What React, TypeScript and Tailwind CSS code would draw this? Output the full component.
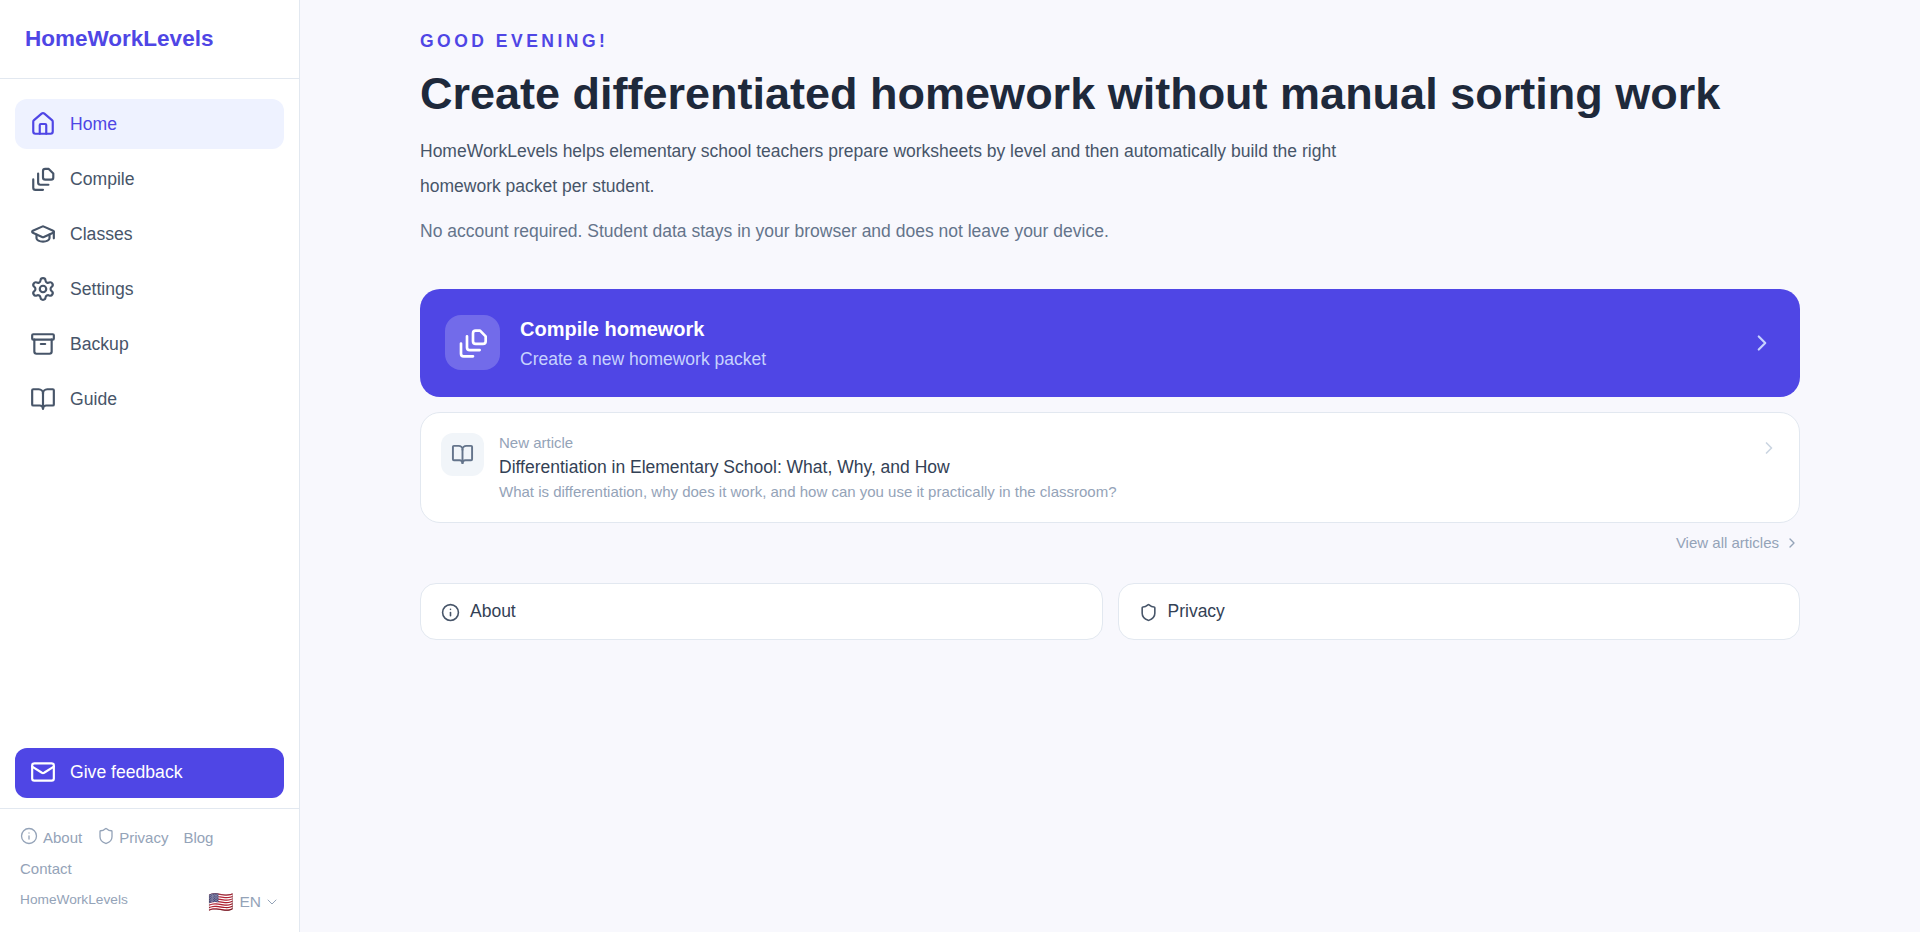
import { Archive, BookOpen, ChevronDown, ChevronRight, GraduationCap, Home, Info, Mail, Settings, Shield } from 'lucide-react';

// three stacked sheets, not in lucide
const CompileIcon = ({ className, strokeWidth = 2 }: { className?: string; strokeWidth?: number }) => (
  <svg
    className={className}
    viewBox="0 0 24 24"
    fill="none"
    stroke="currentColor"
    strokeWidth={strokeWidth}
    strokeLinecap="round"
    strokeLinejoin="round"
  >
    <path d="M14 2.700h3.300l4.200 4.300v3.600a2 2 0 0 1-2 2H14a2 2 0 0 1-2-2V4.700a2 2 0 0 1 2-2z" />
    <path d="M7.500 7v8.300a2 2 0 0 0 2 2H17" />
    <path d="M3 12.400V20a2 2 0 0 0 2 2h7" />
  </svg>
);

const NAV = [
  { label: 'Home', icon: Home, active: true },
  { label: 'Compile', icon: CompileIcon },
  { label: 'Classes', icon: GraduationCap },
  { label: 'Settings', icon: Settings },
  { label: 'Backup', icon: Archive },
  { label: 'Guide', icon: BookOpen },
];

const Sidebar = () => (
  <aside className="flex h-[932px] w-[300px] shrink-0 flex-col border-r border-[#e2e8f0] bg-white">
    <div className="flex h-[79px] items-center border-b border-[#e2e8f0] pl-[25px]">
      <span className="text-[22.5px] font-bold text-[#4f46e5]">HomeWorkLevels</span>
    </div>
    <nav className="flex flex-1 flex-col gap-[5px] px-[15px] pt-[20px]">
      {NAV.map((item) => (
        <a
          key={item.label}
          className={`flex h-[50px] items-center gap-[14px] rounded-[12px] px-[15px] text-[17.6px] ${
            item.active ? 'bg-[#eef2ff] text-[#4f46e5]' : 'text-[#475569]'
          }`}
        >
          <item.icon className="size-[26px]" strokeWidth={2} />
          {item.label}
        </a>
      ))}
    </nav>
    <div className="px-[15px] pb-[10px]">
      <button className="flex h-[50px] w-full items-center gap-[14px] rounded-[12px] bg-[#4f46e5] px-[15px] pb-[2px] text-[17.6px] text-white">
        <Mail className="size-[26px]" strokeWidth={2} />
        Give feedback
      </button>
    </div>
    <div className="h-[124px] border-t border-[#e2e8f0] px-[20px] pt-[17px] text-[#94a3b8]">
      <div className="flex items-center gap-[15px] text-[15px] leading-[24px]">
        <span className="flex items-center gap-[5px]">
          <Info className="size-[18px] -translate-y-[2px]" strokeWidth={1.75} />
          About
        </span>
        <span className="flex items-center gap-[4px]">
          <Shield className="size-[18px] -translate-y-[2px]" strokeWidth={1.75} />
          Privacy
        </span>
        <span>Blog</span>
      </div>
      <div className="mt-[7px] text-[15px] leading-[24px]">Contact</div>
      <div className="mt-[9px] flex items-start justify-between">
        <span className="text-[13.7px] leading-[20px]">HomeWorkLevels</span>
        <span className="-mr-[1px] flex items-center gap-[5px] text-[15.5px] leading-[24px]">
          <span className="text-[20.5px] leading-[24px]">🇺🇸</span>
          EN
          <ChevronDown className="-ml-[2px] size-[16px]" strokeWidth={1.5} />
        </span>
      </div>
    </div>
  </aside>
);

const InfoCard = ({ icon: Icon, label }: { icon: typeof Info; label: string }) => (
  <a className="flex h-[57px] flex-1 items-center gap-[10px] rounded-[16px] border border-[#e2e8f0] bg-white px-[20px] text-[17.5px] text-[#334155]">
    <Icon className="size-[19px] translate-y-[1px] text-[#475569]" strokeWidth={2} />
    {label}
  </a>
);

export default function App() {
  return (
    <div className="flex h-[932px] overflow-hidden bg-[#f8f8fd] font-['Liberation_Sans',sans-serif]">
      <Sidebar />
      <main className="flex-1 px-[120px] pt-[31px]">
        <p className="text-[17.5px] leading-[21px] font-bold tracking-[3.5px] text-[#4f46e5]">GOOD EVENING!</p>
        <h1 className="mt-[15px] text-[45px] leading-[54px] font-bold whitespace-nowrap text-[#1e293b]">
          Create differentiated homework without manual sorting work
        </h1>
        <p className="mt-[13px] w-[960px] text-[17.5px] leading-[35px] text-[#475569]">
          HomeWorkLevels helps elementary school teachers prepare worksheets by level and then automatically build the right homework packet per student.
        </p>
        <p className="mt-[10px] text-[17.5px] leading-[35px] text-[#64748b]">
          No account required. Student data stays in your browser and does not leave your device.
        </p>

        <a className="mt-[40px] flex h-[108px] items-center rounded-[20px] bg-[#4f46e5] pr-[25px] pl-[25px]">
          <div className="-mt-[1px] flex size-[55px] items-center justify-center rounded-[16px] bg-white/20 text-white">
            <CompileIcon className="size-[32px]" strokeWidth={2} />
          </div>
          <div className="ml-[20px] flex-1 pt-[2px]">
            <div className="text-[20px] leading-[30px] font-bold text-white">Compile homework</div>
            <div className="text-[17.5px] leading-[30px] text-[#c7d2fe]">Create a new homework packet</div>
          </div>
          <ChevronRight className="size-[26px] text-[#c7d2fe]" strokeWidth={2} />
        </a>

        <a className="mt-[15px] flex h-[111px] items-start rounded-[20px] border border-[#e2e8f0] bg-white pt-[20px] pr-[20px] pl-[20px]">
          <div className="flex size-[43px] shrink-0 items-center justify-center rounded-[12px] bg-[#f1f5f9] text-[#64748b]">
            <BookOpen className="size-[23px]" strokeWidth={2} />
          </div>
          <div className="ml-[15px] flex-1">
            <div className="text-[15px] leading-[20px] text-[#94a3b8]">New article</div>
            <div className="mt-[2px] text-[17.5px] leading-[25px] text-[#334155]">
              Differentiation in Elementary School: What, Why, and How
            </div>
            <div className="mt-[1px] text-[15px] leading-[22px] text-[#94a3b8]">
              What is differentiation, why does it work, and how can you use it practically in the classroom?
            </div>
          </div>
          <ChevronRight className="mt-[5px] size-[20px] text-[#cbd5e1]" strokeWidth={2} />
        </a>

        <div className="mt-[10px] flex items-center justify-end gap-[5px] text-[15px] leading-[20px] text-[#94a3b8]">
          View all articles
          <ChevronRight className="size-[16px]" strokeWidth={2} />
        </div>

        <div className="mt-[30px] flex gap-[15px]">
          <InfoCard icon={Info} label="About" />
          <InfoCard icon={Shield} label="Privacy" />
        </div>
      </main>
    </div>
  );
}
